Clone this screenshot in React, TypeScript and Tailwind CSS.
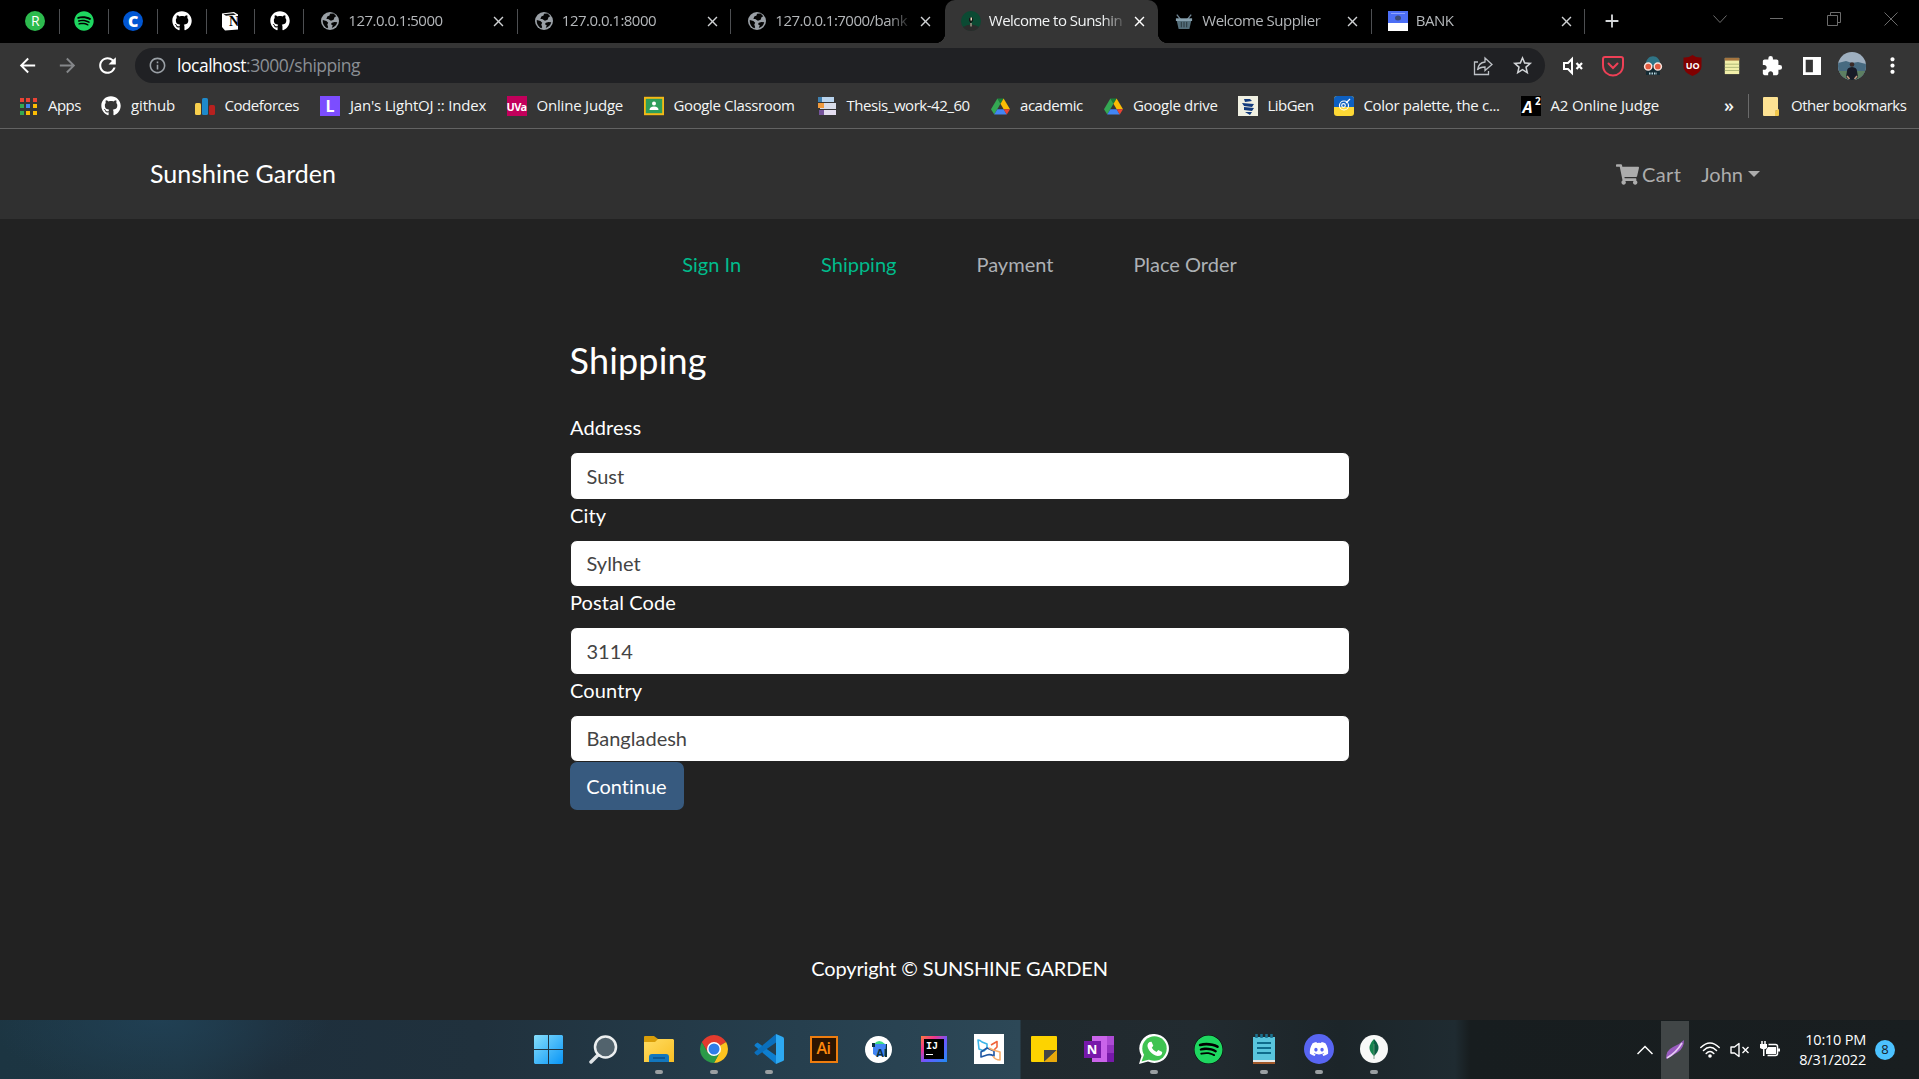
import React from "react";
import { FaGithub, FaSpotify, FaDiscord, FaShoppingCart } from "react-icons/fa";
import { MdRefresh, MdArrowBack, MdArrowForward, MdExtension, MdClose, MdAdd, MdMoreVert, MdInfoOutline, MdStarBorder } from "react-icons/md";

type Kids = { children?: React.ReactNode };

const Svg = ({ s = 20, vb = "0 0 20 20", children }: Kids & { s?: number; vb?: string }) => (
  <svg width={s} height={s} viewBox={vb} fill="none" className="block shrink-0">{children}</svg>
);

/* ---------- tab strip ---------- */

const NotionIcon = () => (
  <div className="relative flex h-5 w-[18px] items-end justify-end">
    <Svg s={20} vb="0 0 20 20">
      <path d="M2 2.500L14 1l4 2.500v15L5 19.500 2 16z" fill="#fff" />
      <path d="M3.500 3.300L13.500 2.300l2.500 1.500L6 4.700z" fill="#111" />
    </Svg>
    <span className="absolute bottom-[2px] right-[1px] font-['Liberation_Serif',serif] text-[14px] font-bold leading-none text-black">N</span>
  </div>
);

const GlobeIcon = () => (
  <Svg s={18}>
    <circle cx="10" cy="10" r="10" fill="#9aa0a6" />
    <path d="M2 9l4 1 2 2-1 2 1 3-1 1C4 17 1.500 13 2 9zM10 2l4-.3 3 3-2 1-1 3-3 1-3-2-2 .2 1-3 2.500-1zM12 12l3-1 3 .5c-.5 3-3 5.500-6 6.200l1-3-2-1z" fill="#050505" />
  </Svg>
);

const GardenIcon = () => (
  <Svg>
    <circle cx="10" cy="10" r="10" fill="#0b4a33" />
    <path d="M2 16Q10 11 18 16Q15 20 10 20T2 16" fill="#2b2b2b" />
    <path d="M8 7.500q2.500-3 4 0v3h-1.500v5H9v-5H8z" fill="#141414" />
    <path d="M9.500 6.500h1.500v3H9.500zM9.500 12H10.500v3.500h-1z" fill="#e8dcc0" />
  </Svg>
);

const BasketIcon = () => (
  <Svg s={18}>
    <path d="M2 3l4 5M18 3l-4 5" stroke="#6d8291" strokeWidth="1.500" />
    <path d="M1 7h18v3H1z" fill="#88a2b0" />
    <path d="M2 10h16l-2 9H4z" fill="#546e7a" />
    <path d="M7 11v6M10 11v6M13 11v6" stroke="#263238" />
  </Svg>
);

const BankIcon = () => (
  <Svg>
    <path d="M0 0h20v20H0z" fill="#fff" />
    <path d="M0 0h20v12H0z" fill="#4c6ef5" />
    <path d="M3 2.500h14" stroke="#8ea3fb" />
    <ellipse cx="10" cy="7" rx="3" ry="2.500" fill="#3b4a78" />
  </Svg>
);

const pinned = [
  <div className="flex size-5 items-center justify-center rounded-full bg-[#2dba4e] font-['Open_Sans',sans-serif] text-[14px] leading-none text-white">R</div>,
  <div className="rounded-full bg-black"><FaSpotify size={20} color="#1ed760" /></div>,
  <div className="flex size-5 items-center justify-center rounded-full bg-[#0056d2] font-['Open_Sans',sans-serif] text-[16px] font-extrabold leading-none text-white">C</div>,
  <FaGithub size={20} color="#fff" />,
  <NotionIcon />,
  <FaGithub size={20} color="#fff" />,
];

const Tab = ({ icon, title, active, sep = true }: { icon: React.ReactNode; title: string; active?: boolean; sep?: boolean }) => (
  <div className={`relative flex h-[43px] w-[213.500px] shrink-0 items-center pb-px pl-4 pr-[10.500px] ${active ? "rounded-t-[10px] bg-[#353535]" : ""}`}>
    <div className="flex w-5 shrink-0 justify-center">{icon}</div>
    <div className={`ml-2 flex-1 overflow-hidden whitespace-nowrap pb-0.5 text-[15px] tracking-[-0.035em] ${active ? "text-[#f1f3f4]" : "text-[#b4b7ba]"} [mask-image:linear-gradient(to_right,black_82%,transparent)]`}>{title}</div>
    <MdClose size={17} className={active ? "ml-1 text-white" : "ml-1 text-[#cfd1d3]"} />
    {sep && <div className="absolute right-0 top-[9px] h-[25px] w-px bg-[#4d4f52]" />}
    {active && (
      <>
        <div className="absolute -left-2.5 bottom-0 size-2.5 bg-[radial-gradient(circle_at_0_0,transparent_10px,#353535_10.500px)]" />
        <div className="absolute -right-2.5 bottom-0 size-2.5 bg-[radial-gradient(circle_at_100%_0,transparent_10px,#353535_10.500px)]" />
      </>
    )}
  </div>
);

const TabStrip = () => (
  <div className="flex h-[43px] bg-black pl-[11px]">
    {pinned.map((icon, i) => (
      <div key={i} className="relative flex w-[48.900px] items-center justify-center pb-px">
        {icon}
        <div className="absolute right-0 top-[9px] h-[25px] w-px bg-[#4d4f52]" />
      </div>
    ))}
    <Tab icon={<GlobeIcon />} title="127.0.0.1:5000" />
    <Tab icon={<GlobeIcon />} title="127.0.0.1:8000" />
    <Tab icon={<GlobeIcon />} title="127.0.0.1:7000/bank" sep={false} />
    <Tab icon={<GardenIcon />} title="Welcome to Sunshin" active sep={false} />
    <Tab icon={<BasketIcon />} title="Welcome Supplier" />
    <Tab icon={<BankIcon />} title="BANK" />
    <div className="flex w-[53px] items-center justify-center pb-px text-[#d5d7d9]"><MdAdd size={22} /></div>
    <div className="ml-auto flex h-[37px] items-center text-[#6c6c6c]">
      <div className="flex w-[57px] justify-center"><Svg s={14} vb="0 0 14 14"><path d="M.5 3.500L7 10.500l6.500-7" stroke="currentColor" /></Svg></div>
      <div className="flex w-[57px] justify-center"><div className="h-px w-[13px] bg-[#6c6c6c]" /></div>
      <div className="flex w-[57px] justify-center"><Svg s={14} vb="0 0 14 14"><path d="M.5 3.500h10v10H.5zM3.500 3V.5h10v10H11" stroke="currentColor" /></Svg></div>
      <div className="flex w-[57px] justify-center"><Svg s={14} vb="0 0 14 14"><path d="M.5.5l13 13M13.500.5l-13 13" stroke="currentColor" /></Svg></div>
    </div>
  </div>
);

/* ---------- toolbar ---------- */

const MuteIcon = () => (
  <Svg s={22} vb="0 0 22 22">
    <path d="M2 8h4l4-4v14l-4-4H2z" stroke="#fff" strokeWidth="2" />
    <path d="M14.500 8l5.500 6M20 8l-5.500 6" stroke="#fff" strokeWidth="2.200" />
  </Svg>
);
const PocketIcon = () => (
  <Svg s={22} vb="0 0 22 22">
    <path d="M3 2h16q2 0 2 2v6c0 14-20 14-20 0V4q0-2 2-2z" stroke="#ee4056" strokeWidth="2" />
    <path d="M6.500 8.500L11 13l4.500-4.500" stroke="#ee4056" strokeWidth="2" strokeLinecap="round" />
  </Svg>
);
const GlassesIcon = () => (
  <Svg>
    <path d="M2.500 10C2.500-3 17.500-3 17.500 10z" fill="#2f7486" />
    <path d="M3 10h14v9H3z" fill="#142a33" />
    <circle cx="5.200" cy="10.500" r="3.600" fill="#e35b3f" stroke="#fbe3dc" strokeWidth="1.500" />
    <circle cx="14.800" cy="10.500" r="3.600" fill="#e35b3f" stroke="#fbe3dc" strokeWidth="1.500" />
    <path d="M6 17.500h8" stroke="#b7d5de" strokeWidth="2" strokeDasharray="1.500 1" />
  </Svg>
);
const ShieldIcon = () => (
  <div className="relative flex items-center justify-center">
    <Svg s={21} vb="0 0 20 21"><path d="M10 0q4 3 9 2.500v9q0 6-9 9.500-9-3.500-9-9.500v-9Q6 3 10 0z" fill="#800000" /></Svg>
    <span className="absolute text-[9px] font-bold leading-none tracking-tight text-white">UO</span>
  </div>
);
const NoteIcon = () => (
  <Svg s={18}>
    <path d="M2 1h16v18H2z" fill="#f2efaa" />
    <path d="M2 1h16v3H2z" fill="#a5753f" />
    <path d="M2 8h16M2 11.500h16M2 15h16" stroke="#a9b374" />
  </Svg>
);
const AvatarIcon = () => (
  <Svg s={28} vb="0 0 28 28">
    <clipPath id="av"><circle cx="14" cy="14" r="14" /></clipPath>
    <g clipPath="url(#av)">
      <path d="M0 0h28v28H0z" fill="#9fb0c0" />
      <path d="M0 11l8-2 6 2 6-1 8 2v16H0z" fill="#476a80" />
      <path d="M0 19h28v9H0z" fill="#5d7f62" />
      <path d="M9 19q0-3.500 5-4 5 .5 5 4l1 6-3 3h-6l-3-3z" fill="#181b27" />
      <circle cx="14" cy="12.500" r="2.300" fill="#3a2a26" />
      <path d="M9 24l2.500 3M19 24l-2.500 3" stroke="#c59a80" strokeWidth="1.500" />
    </g>
  </Svg>
);

const extensions = [
  <MuteIcon />, <PocketIcon />, <GlassesIcon />, <ShieldIcon />, <NoteIcon />,
  <MdExtension size={22} color="#fff" />,
  <Svg s={18}><path d="M0 0h20v20H0zM3 3v14h8V3z" fill="#fff" fillRule="evenodd" /></Svg>,
  <AvatarIcon />,
  <MdMoreVert size={25} color="#fff" />,
];

const Toolbar = () => (
  <div className="flex h-[45px] items-center bg-[#353535] pl-[7px] pr-[7px]">
    <div className="flex w-10 justify-center"><MdArrowBack size={23} color="#fff" /></div>
    <div className="flex w-10 justify-center"><MdArrowForward size={23} color="#85878a" /></div>
    <div className="flex w-10 justify-center"><MdRefresh size={25} color="#fff" /></div>
    <div className="ml-2 flex h-[35px] w-[1410px] items-center rounded-full bg-[#202124] pl-[13px] pr-[11px]">
      <MdInfoOutline size={19} color="#9aa0a6" />
      <div className="ml-2.5 flex-1 text-[17.500px] tracking-[-0.027em] text-[#8b8f94]"><span className="text-white">localhost</span>:3000/shipping</div>
      <Svg s={20}>
        <path d="M5 6H1.500v12.500h14V15" stroke="#bdc1c6" strokeWidth="1.300" />
        <path d="M12 2l7 6.500-7 6V11c-3.500 0-6 .8-7.500 3 .5-4.500 3-7.500 7.500-8z" stroke="#bdc1c6" strokeWidth="1.300" />
      </Svg>
      <MdStarBorder size={23} color="#d0d3d6" className="ml-[18px]" />
    </div>
    <div className="ml-2 flex">
      {extensions.map((icon, i) => (
        <div key={i} className="flex h-7 w-[39.900px] items-center justify-center">{icon}</div>
      ))}
    </div>
  </div>
);

/* ---------- bookmarks ---------- */

const AppsIcon = () => (
  <div className="grid grid-cols-3 gap-[2.500px]">
    {["bg-[#ea4335]", "bg-[#ea4335]", "bg-[#ea4335]", "bg-[#34a853]", "bg-[#4285f4]", "bg-[#fbbc04]", "bg-[#34a853]", "bg-[#fbbc04]", "bg-[#fbbc04]"].map((c, i) => (
      <i key={i} className={`block size-1 ${c}`} />
    ))}
  </div>
);
const DriveIcon = () => (
  <Svg vb="0 0 20 20" s={19}>
    <path d="M6.700 1.500h6.600L10 7.200z" fill="#188038" />
    <path d="M6.700 1.500L10 7.200 3.400 18.500 0 12.800z" fill="#34a853" />
    <path d="M13.300 1.500L10 7.200l3.300 5.600H20z" fill="#fbbc04" />
    <path d="M6.700 12.800h6.600l3.300 5.700H3.400z" fill="#4285f4" />
    <path d="M13.300 12.800H20l-3.400 5.700z" fill="#ea4335" />
  </Svg>
);

const bookmarks: { icon: React.ReactNode; label: string; w: string }[] = [
  { icon: <AppsIcon />, label: "Apps", w: "w-[83px] tracking-[-0.035em]" },
  { icon: <FaGithub size={20} color="#fff" />, label: "github", w: "w-[93.500px] tracking-[-0.010em]" },
  { icon: <Svg><rect y="7" width="6" height="12" rx="1.500" fill="#f8cf4d" /><rect x="7" y="2" width="6" height="17" rx="1.500" fill="#1f8acb" /><rect x="14" y="9" width="6" height="10" rx="1.500" fill="#b8211f" /></Svg>, label: "Codeforces", w: "w-[125.500px] tracking-[-0.030em]" },
  { icon: <div className="flex size-5 items-center justify-center bg-[#7c4dff] text-[16px] font-bold leading-none text-white">L</div>, label: "Jan's LightOJ :: Index", w: "w-[186.500px] tracking-[-0.013em]" },
  { icon: <div className="flex size-5 items-center justify-center bg-[#c2005b] text-[11px] font-bold leading-none tracking-[-0.070em] text-white">UVa</div>, label: "Online Judge", w: "w-[137px] tracking-[-0.013em]" },
  { icon: <Svg><rect x=".8" y="1.800" width="18.400" height="16.400" fill="#2e9e5b" stroke="#f5ba15" strokeWidth="2" /><circle cx="10" cy="7.500" r="2" fill="#fff" /><path d="M5.500 14q0-3.500 4.500-3.500t4.500 3.500z" fill="#fff" /></Svg>, label: "Google Classroom", w: "w-[173px] tracking-[-0.025em]" },
  { icon: <Svg><path d="M1 1h16v5H1z" fill="#b9d4ee" /><path d="M1 1h4v5H1z" fill="#3f7fae" /><path d="M3 7h16v6H3z" fill="#d8dce8" /><path d="M1 7h6v5H1z" fill="#ef9a3d" /><path d="M2 14h17v5H2z" fill="#e4def0" /><path d="M2 14h5v5H2z" fill="#76549c" /></Svg>, label: "Thesis_work-42_60", w: "w-[173.500px] tracking-[-0.030em]" },
  { icon: <DriveIcon />, label: "academic", w: "w-[113px] tracking-[-0.030em]" },
  { icon: <DriveIcon />, label: "Google drive", w: "w-[134.500px] tracking-[-0.020em]" },
  { icon: <Svg><path d="M0 0h20v20H0z" fill="#f0f0e2" /><path d="M6 3h6l2 2-7 1zM4 7l12 1-2 3-8-1zM6 11l10 1-2 3-8-1zM7 16l7 0-2 3z" fill="#123a7c" /></Svg>, label: "LibGen", w: "w-[96px] tracking-[-0.035em]" },
  { icon: <Svg><rect width="20" height="20" rx="3" fill="#fdd835" /><path d="M0 11V3q0-3 3-3h14q3 0 3 3v8z" fill="#0d5fc0" /><circle cx="10" cy="9.500" r="4.500" stroke="#fff" strokeWidth="1.200" /><circle cx="9.500" cy="9.500" r="1.800" stroke="#fff" strokeWidth="1.200" /><path d="M12 7l4-4" stroke="#fff" strokeWidth="1.200" /></Svg>, label: "Color palette, the c...", w: "w-[187px] tracking-[-0.022em]" },
  { icon: <div className="relative size-5 bg-black text-white"><span className="absolute left-0.5 top-0.5 text-[16px] font-bold italic leading-[18px]">A</span><span className="absolute right-0 top-0 text-[10px] font-bold leading-[10px]">2</span></div>, label: "A2 Online Judge", w: "w-[150px] tracking-[-0.010em]" },
];

const Bookmarks = () => (
  <div className="flex h-[41px] items-center border-b border-[#636363] bg-[#353535] pb-1 pl-[18px] text-[15px] text-[#f4f5f6]">
    {bookmarks.map((b) => (
      <div key={b.label} className={`flex shrink-0 items-center gap-2.5 whitespace-nowrap ${b.w}`}>
        <div className="flex w-5 shrink-0 justify-center">{b.icon}</div>
        <span className="pb-0.5">{b.label}</span>
      </div>
    ))}
    <div className="ml-auto flex items-center pr-3">
      <span className="mr-3.5 pb-0.5 text-[18px] font-semibold leading-5">»</span>
      <div className="h-6 w-px bg-[#6b6b6b]" />
      <svg width="16" height="19" viewBox="0 0 16 19" className="ml-3.5"><path d="M1 0h13q1 0 1 1v12l-3 1v5H1q-1 0-1-1V1q0-1 1-1z" fill="#fde293" /><path d="M12 19v-5l4-2v6q0 1-1 1z" fill="#f2c84b" /></svg>
      <span className="ml-3 w-[116px] whitespace-nowrap pb-0.5 tracking-[-0.035em]">Other bookmarks</span>
    </div>
  </div>
);

/* ---------- page ---------- */

const steps = [
  { label: "Sign In", c: "text-[#00bc8c]" },
  { label: "Shipping", c: "text-[#00bc8c]" },
  { label: "Payment", c: "text-[#adb1b5]" },
  { label: "Place Order", c: "text-[#adb1b5]" },
];
const fields = [["Address", "Sust"], ["City", "Sylhet"], ["Postal Code", "3114"], ["Country", "Bangladesh"]];

const Page = () => (
  <div className="flex h-[891px] flex-col bg-[#222222] font-['Lato',sans-serif] text-[20px] leading-[30px] text-white [font-variant-ligatures:none]">
    <nav className="flex h-[90px] shrink-0 items-center justify-between bg-[#303030] pl-[150px] pr-[159px]">
      <div className="pb-0.5 text-[25px]">Sunshine Garden</div>
      <div className="flex items-center text-[#acacac]">
        <FaShoppingCart size={23} />
        <span className="ml-[3px] tracking-[0.020em]">Cart</span>
        <span className="ml-5">John</span>
        <span className="ml-[5px] border-x-[6px] border-t-[6px] border-x-transparent border-t-[#acacac]" />
      </div>
    </nav>
    <div className="mt-[30px] flex justify-center gap-20">
      {steps.map((s) => <div key={s.label} className={s.c}>{s.label}</div>)}
    </div>
    <main className="mx-auto mt-[59px] w-[780px]">
      <h1 className="h-[74px] text-[36px] leading-[44px] tracking-[0.005em]">Shipping</h1>
      {fields.map(([label, value]) => (
        <div key={label} className="h-[87.500px]">
          <label className="block h-10 pl-[0.500px] tracking-[0.006em]">{label}</label>
          <input readOnly defaultValue={value} className="block h-[47.500px] w-full rounded-[7px] border border-[#222222] bg-white pl-4 pr-[15px] text-[#444444]" />
        </div>
      ))}
      <button className="h-[48px] w-[114px] rounded-[7px] bg-[#375a7f]">Continue</button>
    </main>
    <footer className="mb-[37px] mt-auto text-center tracking-[-0.007em]">Copyright © SUNSHINE GARDEN</footer>
  </div>
);

/* ---------- taskbar ---------- */

const WindowsIcon = () => (
  <Svg s={29} vb="0 0 29 29">
    <defs><linearGradient id="win" x1="0" y1="0" x2="1" y2="1"><stop stopColor="#86defb" /><stop offset="1" stopColor="#0895f7" /></linearGradient></defs>
    <path d="M1 0h13v14H0V1zM15 0h13l1 1v13H15zM0 15h14v14H1l-1-1zM15 15h14v13l-1 1H15z" fill="url(#win)" />
  </Svg>
);
const SearchIcon = () => (
  <Svg s={29} vb="0 0 29 29">
    <path d="M2 27l8-8" stroke="#dfe3e6" strokeWidth="3.500" strokeLinecap="round" />
    <circle cx="16.500" cy="12" r="10.500" fill="#52636d" stroke="#eceff0" strokeWidth="2.500" />
  </Svg>
);
const ExplorerIcon = () => (
  <Svg s={30} vb="0 0 30 30">
    <defs><linearGradient id="fold" x1="0" y1="0" x2="1" y2="1"><stop stopColor="#ffdc62" /><stop offset="1" stopColor="#f9bf24" /></linearGradient></defs>
    <path d="M0 10V3q0-1 1-1h9l4 3v5z" fill="#d99e09" />
    <path d="M0 8h11l3-3h15l1 1v22H0z" fill="url(#fold)" />
    <path d="M5 28v-5q0-3 3-3h14q3 0 3 3v5z" fill="#1277be" />
    <path d="M9 24h12" stroke="#0b4f87" strokeWidth="1.500" />
  </Svg>
);
const ChromeIcon = () => (
  <Svg s={28} vb="-14 -14 28 28">
    <path d="M0 0L-12.120-7A14 14 0 0 1 12.120-7z" fill="#e33b2e" />
    <path d="M0 0L12.120-7A14 14 0 0 1 0 14L5.600 3z" fill="#fcc31e" />
    <path d="M-12.120-7A14 14 0 0 0 0 14L6 3.500H-6z" fill="#2b9a48" />
    <path d="M-12.120-7L-6 3.500 0 0V-7H12.120z" fill="#e33b2e" />
    <circle r="7" fill="#fff" /><circle r="5.500" fill="#2f7de9" />
  </Svg>
);
const CodeIcon = () => (
  <Svg s={30} vb="0 0 30 30">
    <path d="M2 9.500L3.500 8.500 22 21.500V30L.7 12q-.7-1 1.300-2.500z" fill="#0e7fd0" />
    <path d="M2 20.500L3.500 21.500 22 8.500V0L.7 18q-.7 1 1.300 2.500z" fill="#0a6fbd" />
    <path d="M22 0l7 3q1 .5 1 1.500v21q0 1-1 1.500l-7 3z" fill="#2da9f2" />
  </Svg>
);
const AndroidStudioIcon = () => (
  <div className="relative flex size-[27px] items-center justify-center rounded-full bg-white">
    <Svg s={20}>
      <path d="M5 5q5-6 11 0z" fill="#3ddc84" />
      <path d="M4 5h13v12H7l-3-2z" fill="#4285f4" />
      <path d="M3 4h3v4H3zM17 5h1v13h-2z" fill="#0b3142" />
    </Svg>
    <span className="absolute bottom-[5px] right-[5px] text-[11px] font-bold leading-none tracking-tight text-[#0b3142]">AI</span>
  </div>
);
const IntelliJIcon = () => (
  <div className="flex size-[26px] items-center justify-center bg-[linear-gradient(135deg,#fe7a3c_0%,#f0368c_28%,#6b57ff_55%,#1f8cf5_100%)]">
    <div className="flex size-5 flex-col bg-black pl-[2.500px] pt-[3px] font-['Liberation_Mono',monospace] text-[10px] font-bold leading-[9px] text-white">
      <span>IJ</span><i className="mt-[3px] block h-px w-[7px] bg-white" />
    </div>
  </div>
);
const LinkShapesIcon = () => (
  <div className="flex size-[30px] items-center justify-center bg-white">
    <Svg s={26} vb="0 0 26 26">
      <g strokeWidth="1.600" strokeLinejoin="round">
        <path d="M2 4q2 0 4 2l5 2v4l-3 3-5-2z" stroke="#3bb5e8" />
        <path d="M15 9l6-3.500v5.500l-3 3" stroke="#f0643c" />
        <path d="M5 21v-5l6-4 7 3v5q-4-2-7-1z" stroke="#1f57a4" />
        <path d="M13 12l4 2 7 2v8q-5 0-7-4" stroke="#f6ad6a" />
      </g>
    </Svg>
  </div>
);
const StickyIcon = () => (
  <Svg s={26} vb="0 0 26 26"><rect width="26" height="26" rx="1" fill="#fdd300" /><path d="M13 26V14h13z" fill="#454545" /><path d="M13 26h12l1-1V14z" fill="#e9a90c" /></Svg>
);
const OneNoteIcon = () => (
  <div className="relative h-[26px] w-[30px]">
    <div className="absolute right-0 top-0 grid h-[26px] w-[22px] grid-cols-[15px_7px] bg-[#ca64ea]">
      <i /><span className="grid grid-rows-3"><i className="bg-[#ae4bd5]" /><i className="bg-[#9332bf]" /><i className="bg-[#7719aa]" /></span>
    </div>
    <div className="absolute left-0 top-[5px] flex size-[17px] items-center justify-center bg-[#7719aa] text-[13px] font-bold leading-none text-white">N</div>
  </div>
);
const WhatsIcon = () => (
  <Svg s={30} vb="0 0 30 30"><path d="M15.500 0A14.500 14.500 0 1 1 9 27.500L0 30l2.500-8A14.500 14.500 0 0 1 15.500 0z" fill="#fff" /><circle cx="15.500" cy="14.500" r="12.200" fill="#3fc351" /><path d="M2.500 27.500l3-8 5 6z" fill="#3fc351" /><path d="M10.500 8l2-.3 1.800 4-1.500 2q1.500 3 4.700 4.300l1.700-2 4 2q.2 4-4.500 4C13 21 8 15 8.500 11q.3-2 2-3z" fill="#fff" /></Svg>
);
const NotepadIcon = () => (
  <Svg s={30} vb="0 0 30 30">
    <path d="M4 3h22v24H4z" fill="#59c5dd" /><path d="M4 26h22v2H4z" fill="#e8eaea" /><path d="M4 28h22v2H4z" fill="#a1592a" />
    <path d="M8 9h14M8 14h14M8 19h14" stroke="#0e6c8c" strokeWidth="1.800" />
    <path d="M7.500 0v4M12.500 0v4M17.500 0v4M22.500 0v4" stroke="#1a7390" strokeWidth="2.500" />
  </Svg>
);
const DiscordIcon = () => (
  <div className="flex size-[30px] items-center justify-center rounded-full bg-[#5865f2]"><FaDiscord size={20} color="#fff" /></div>
);
const MongoIcon = () => (
  <div className="flex size-7 items-center justify-center rounded-full bg-[#f8f9f8]">
    <Svg s={20}><path d="M10 0q-9 9 0 17z" fill="#15864f" /><path d="M10 0q9 9 0 17z" fill="#0a5f43" /><path d="M10 5v15" stroke="#6d8f78" strokeWidth=".8" /></Svg>
  </div>
);

const apps: [React.ReactNode, boolean][] = [
  [<WindowsIcon />, false], [<SearchIcon />, false], [<ExplorerIcon />, true], [<ChromeIcon />, true],
  [<CodeIcon />, true],
  [<div className="flex h-[27px] w-7 items-center justify-center border-2 border-[#ee7d0f] bg-[#2c1400] pb-0.5 text-[16px] font-semibold leading-none tracking-tight text-[#ff8a0d]">Ai</div>, false],
  [<AndroidStudioIcon />, false], [<IntelliJIcon />, false], [<LinkShapesIcon />, false], [<StickyIcon />, false],
  [<OneNoteIcon />, false], [<WhatsIcon />, true],
  [<div className="rounded-full bg-black"><FaSpotify size={29} color="#1ed760" /></div>, false],
  [<NotepadIcon />, true], [<DiscordIcon />, true], [<MongoIcon />, true],
];

const Taskbar = () => (
  <div className="flex h-[59px] bg-[radial-gradient(ellipse_170px_70px_at_160px_0,#214257cc,transparent),linear-gradient(90deg,#1c3542_0px,#1e3644_180px,#1e2f3c_270px,#20313d_480px,#263f4e_800px,#2d4857_1020px,#20292e_1021px,#222b30_1200px,#1c2529_1340px,#1f2b31_1455px,#171d1f_1470px,#191e20_1919px)]">
    <div className="flex pl-[521px]">
      {apps.map(([icon, open], i) => (
        <div key={i} className="relative flex w-[55px] items-center justify-center pb-px">
          {icon}
          {open && <i className="absolute bottom-[5px] h-1 w-2 rounded-full bg-[#9a9fa2]" />}
        </div>
      ))}
    </div>
    <div className="ml-auto flex items-center pr-6 text-white">
      <Svg s={16} vb="0 0 16 16"><path d="M.5 12L8 4.500l7.500 7.500" stroke="#fff" strokeWidth="1.500" /></Svg>
      <div className="ml-2 mt-px flex h-[58px] w-7 items-center justify-center bg-[#414647]">
        <Svg><path d="M1 19Q1 10 8 7t11-7q0 8-6 12T1 19z" fill="#9a5cc0" /><path d="M2 18Q11 13 17 3" stroke="#e7cdf4" strokeWidth="1.500" /></Svg>
      </div>
      <div className="ml-[11px]"><Svg><path d="M.8 7.500q9.200-9 18.400 0M3.500 10.500q6.500-6.500 13 0M6.200 13.500q3.800-3.800 7.600 0" stroke="#fff" strokeWidth="1.500" strokeLinecap="round" /><circle cx="10" cy="16" r="1.800" fill="#fff" /></Svg></div>
      <div className="ml-2.5"><Svg><path d="M1 7h3.500L9 3.500v13L4.500 13H1z" stroke="#fff" strokeWidth="1.400" strokeLinejoin="round" /><path d="M12.500 7l6 6M18.500 7l-6 6" stroke="#fff" strokeWidth="1.400" /></Svg></div>
      <div className="ml-2.5"><Svg><path d="M2 1v4M5 1v4" stroke="#fff" strokeWidth="1.500" /><path d="M0 4h7v4q-3 2.500-7 0zM3 9h1.500v7H3z" fill="#fff" /><path d="M8.500 4.500h7q2 0 2 2v7q0 2-2 2h-8" stroke="#fff" strokeWidth="1.500" /><path d="M8 7h8v7H6v-4z" fill="#fff" /><path d="M18 8.500h2v3h-2z" fill="#fff" /></Svg></div>
      <div className="ml-[18px] w-[68px] whitespace-nowrap text-right text-[14.500px] leading-5 tracking-[-0.015em]"><div>10:10 PM</div><div>8/31/2022</div></div>
      <div className="ml-[9px] flex size-5 items-center justify-center rounded-full bg-[#4cc2ff] text-[13px] leading-none text-[#15202a]">8</div>
    </div>
  </div>
);

export default function App() {
  return (
    <div className="h-[1079px] w-[1919px] overflow-hidden bg-[#222222] font-['Open_Sans','Noto_Sans',sans-serif]">
      <TabStrip />
      <Toolbar />
      <Bookmarks />
      <Page />
      <Taskbar />
    </div>
  );
}
